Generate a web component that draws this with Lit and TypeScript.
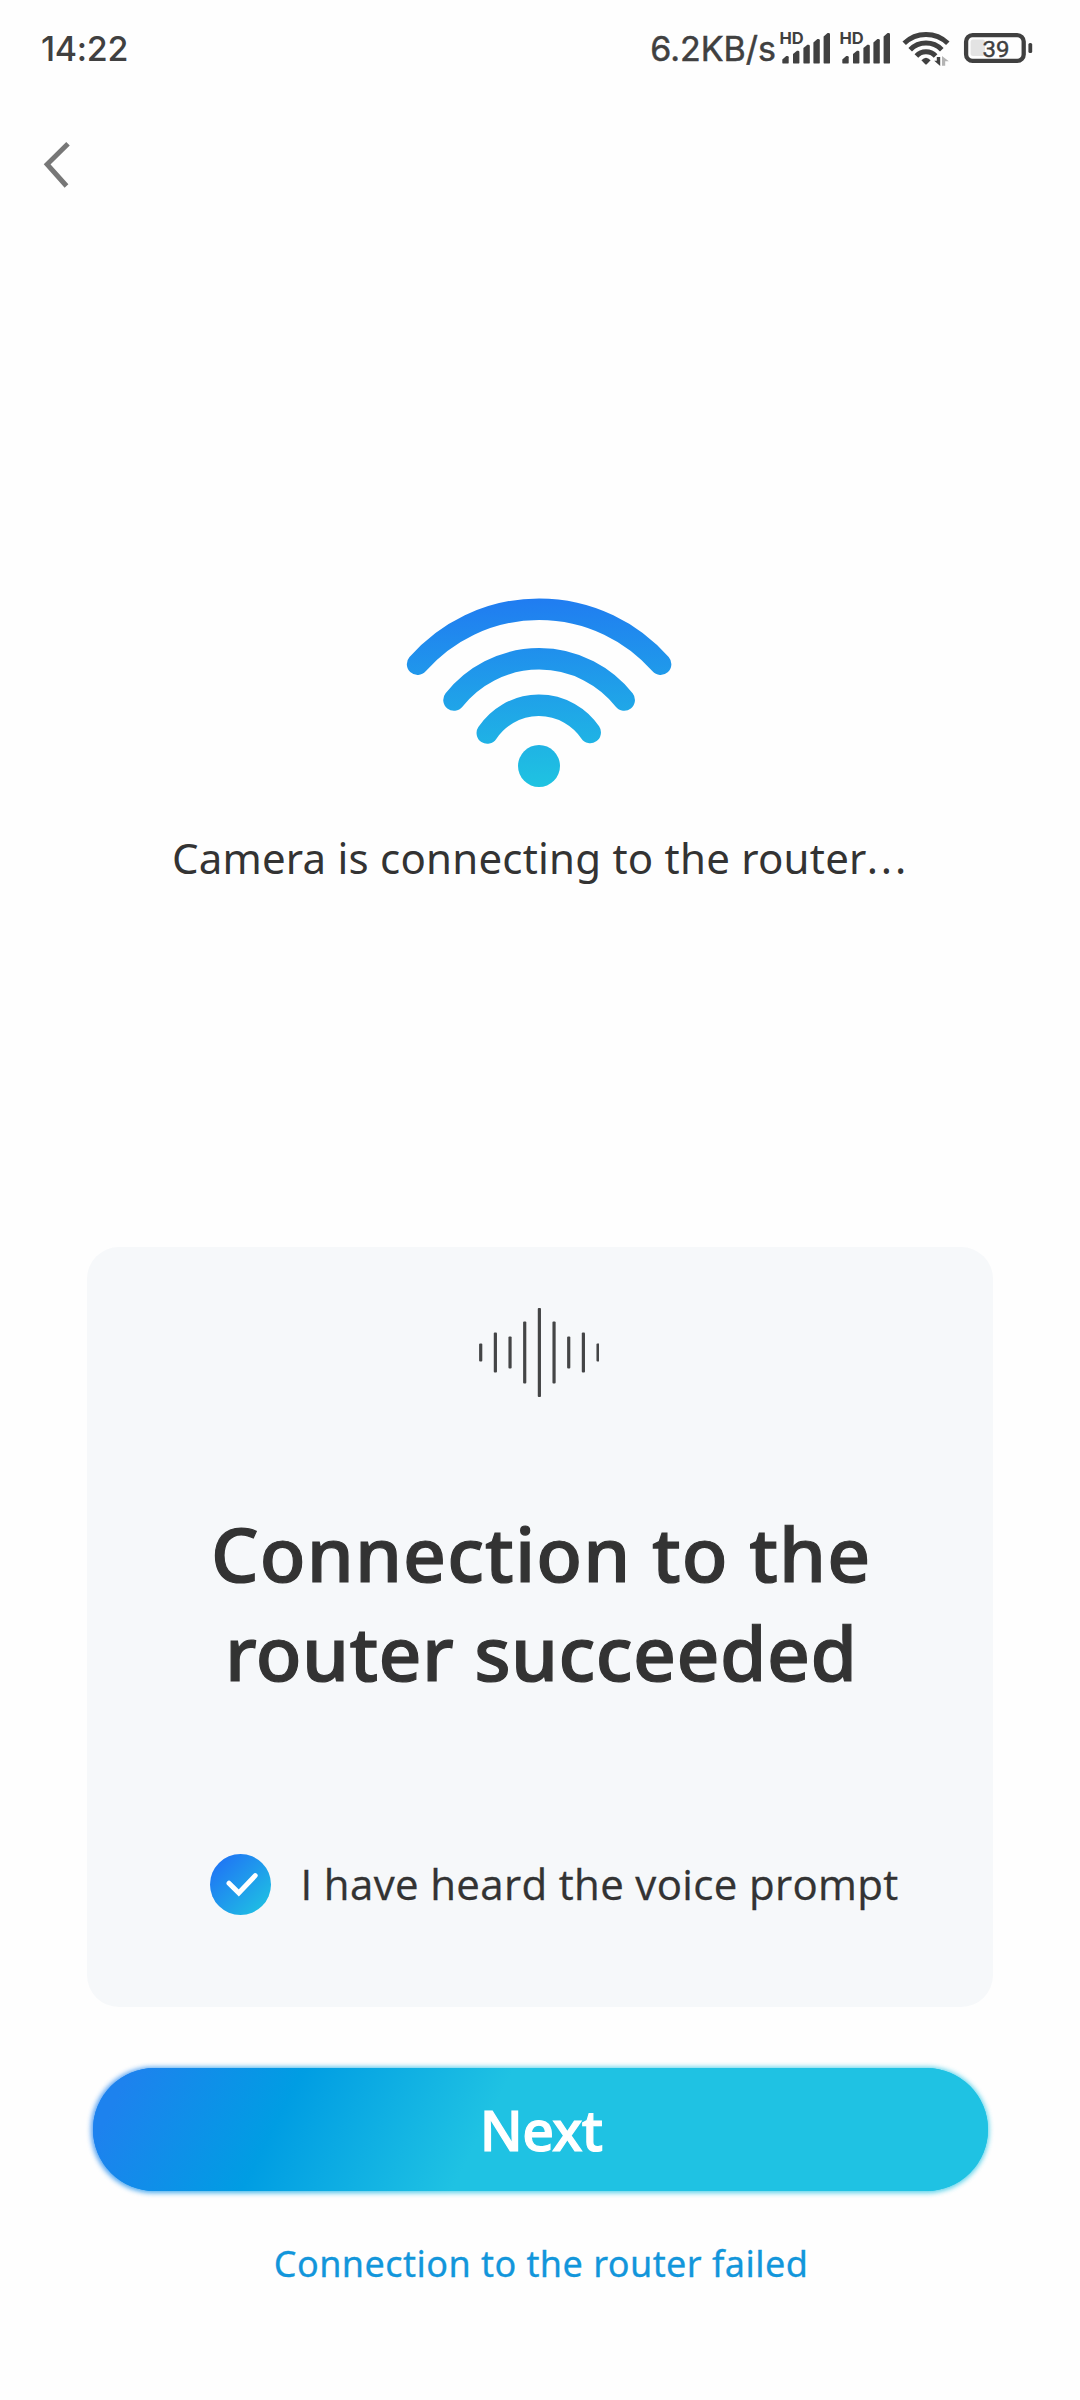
import { LitElement, html, svg, css } from 'lit';
import { customElement, property, state } from 'lit/decorators.js';

/* Device status bar: clock, network speed, two SIM signals, Wi-Fi and battery. */
@customElement('status-bar')
class StatusBar extends LitElement {
  @property() time = '14:22';
  @property() speed = '6.2KB/s';
  @property({ type: Number }) battery = 39;

  static styles = css`
    :host {
      display: flex;
      justify-content: space-between;
      height: 96px;
      padding: 0 47px 0 41px;
      color: #404040;
      font: 500 34px/97px Inter, 'Noto Sans', sans-serif;
    }
    .time {
      letter-spacing: -0.3px;
    }
    .right {
      display: flex;
    }
    .speed {
      margin-right: 4px;
      font-weight: 400;
      -webkit-text-stroke: 0.5px #404040;
    }
    svg {
      display: block;
      height: 96px;
      fill: #404040;
    }
    .signal {
      width: 60px;
    }
    .wifi {
      width: 62px;
    }
    .battery {
      width: 71px;
    }
    .hd {
      font: 700 16px Inter, sans-serif;
    }
    .level {
      font: 400 22.5px Roboto, sans-serif;
      stroke: #404040;
      stroke-width: 0.4;
    }
  `;

  private signal() {
    const bars = [
      [2.3, 56],
      [13, 50.7],
      [23.4, 44.7],
      [33.4, 39],
      [43.6, 33],
    ];
    return html`<svg class="signal" viewBox="0 0 60 96">
      <text class="hd" x="-0.6" y="43.8" textLength="24.2" lengthAdjust="spacingAndGlyphs">HD</text>
      ${bars.map(
        ([x, y]) =>
          svg`<path d="M${x} ${y + 3.4}L${x + 4} ${y}H${x + 5}Q${x + 6.4} ${y} ${x + 6.4} ${y + 1.2}V62.4Q${x + 6.4} 63.6 ${x + 5.2} 63.6H${x + 1.2}Q${x} 63.6 ${x} 62.4Z"/>`,
      )}
    </svg>`;
  }

  render() {
    return html`
      <span class="time">${this.time}</span>
      <div class="right">
        <span class="speed">${this.speed}</span>
        ${this.signal()} ${this.signal()}
        <svg class="wifi" viewBox="900 0 62 96">
          <g fill="none" stroke="#404040" stroke-width="5">
            <path d="M904.2 43.2A31.5 31.5 0 0 1 947.8 43.2" />
            <path d="M910.2 49.8A22 22 0 0 1 941.8 49.8" />
            <path d="M916.4 56A13 13 0 0 1 935.6 56" />
          </g>
          <path d="M921.4 60.2Q926 55.2 930.6 60.2L927 64Q926 65 925 64Z" />
          <path d="M936.8 57H940.2V66L934.2 60.8H936.8Z" />
          <path fill="#b4b4b4" d="M942 56V65.8H945.2V61.2H948.8Z" />
        </svg>
        <svg class="battery" viewBox="962 0 71 96">
          <rect x="970.6" y="39.4" width="14.5" height="16.6" rx="2.5" fill="#e3e3e3" />
          <rect x="966.1" y="35.1" width="57.6" height="25.8" rx="6.5" fill="none" stroke="#404040" stroke-width="4.3" />
          <rect x="1028.4" y="43" width="3.8" height="10" rx="1.6" />
          <text class="level" x="982.6" y="56.5" textLength="27" lengthAdjust="spacingAndGlyphs">${this.battery}</text>
        </svg>
      </div>
    `;
  }
}

@customElement('app-root')
class AppRoot extends LitElement {
  @state() private heard = true;

  static styles = css`
    :host {
      display: flex;
      flex-direction: column;
      box-sizing: border-box;
      width: 1080px;
      height: 2400px;
      overflow: hidden;
      background: #fefefe;
      color: #333;
      font-family: 'Noto Sans', 'Open Sans', sans-serif;
    }
    svg {
      display: block;
    }
    button {
      border: 0;
      padding: 0;
      background: none;
      font-family: inherit;
      color: inherit;
    }
    .nav {
      display: flex;
      align-items: center;
      height: 138px;
      padding-left: 40px;
    }
    .hero {
      display: flex;
      flex-direction: column;
      align-items: center;
      height: 1013px;
      padding-top: 364px;
      box-sizing: border-box;
    }
    .hero svg,
    .card > svg {
      margin-left: -2px;
    }
    .status {
      margin: 41.5px 0 0 1px;
      font-size: 42px;
      line-height: 56px;
      letter-spacing: 0.22px;
      white-space: nowrap;
    }
    .dots {
      letter-spacing: 2.9px;
    }
    .card {
      display: flex;
      flex-direction: column;
      align-items: center;
      box-sizing: border-box;
      width: 906px;
      height: 760px;
      margin-left: 87px;
      padding-top: 60px;
      border-radius: 32px;
      background: #f6f8fa;
    }
    .card h1 {
      margin: 106px 0 0 2.5px;
      font-size: 75px;
      font-weight: 500;
      line-height: 99px;
      text-align: center;
      white-space: nowrap;
      -webkit-text-stroke: 1.2px #333;
    }
    .line {
      display: block;
      letter-spacing: 1.1px;
    }
    .line + .line {
      letter-spacing: 0.45px;
    }
    .confirm {
      display: flex;
      align-items: center;
      align-self: flex-start;
      gap: 29.5px;
      margin: 152px 0 0 123px;
      font-family: 'Open Sans', sans-serif;
      font-size: 42px;
      line-height: 61px;
      letter-spacing: 0.35px;
      white-space: nowrap;
      -webkit-text-stroke: 0.3px #333;
    }
    .confirm span {
      margin-top: -2px;
    }
    .next {
      position: relative;
      isolation: isolate;
      width: 895px;
      height: 123px;
      margin: 61px 0 0 92.5px;
      padding-left: 2px;
      border-radius: 62px;
      background: linear-gradient(117deg, #1d82ee 4%, #009de3 22%, #1fc2e3 44%);
      color: #fff;
      font-size: 55.5px;
      font-weight: 500;
      line-height: 123px;
      letter-spacing: -0.7px;
      -webkit-text-stroke: 1.2px #fff;
    }
    .next::before {
      content: '';
      position: absolute;
      inset: -1.5px;
      z-index: -1;
      border-radius: inherit;
      background: inherit;
      filter: blur(2.5px);
      opacity: 0.75;
    }
    .next::after {
      content: '';
      position: absolute;
      inset: 0;
      z-index: -1;
      border-radius: inherit;
      background: inherit;
    }
    .failed {
      align-self: center;
      margin: 48px 0 0 2px;
      color: #1296db;
      font-size: 36px;
      line-height: 50px;
      letter-spacing: 0.45px;
      -webkit-text-stroke: 0.3px #1296db;
    }
  `;

  private wave() {
    const halves = [9, 20, 16, 31, 44.5, 31, 16, 20, 9];
    return html`<svg width="120" height="91" viewBox="0 0 120 91">
      ${halves.map(
        (h, i) =>
          svg`<rect x=${(i * 14.67 + 0.1).toFixed(2)} y=${45.4 - h} width="3.2" height=${h * 2} rx="1" fill="#444546"/>`,
      )}
    </svg>`;
  }

  render() {
    return html`
      <status-bar></status-bar>
      <nav class="nav">
        <button aria-label="Back">
          <svg width="36" height="52" viewBox="40 139 36 52" fill="none" stroke="#777" stroke-width="5">
            <path d="M68 143.8L47.2 164.3L66.5 186" />
          </svg>
        </button>
      </nav>
      <section class="hero">
        <svg width="268" height="190" viewBox="405 598 268 190">
          <defs>
            <linearGradient id="sky" gradientUnits="userSpaceOnUse" x1="532" y1="598" x2="539" y2="787">
              <stop offset="0" stop-color="#207cf1" />
              <stop offset="1" stop-color="#1fc3e1" />
            </linearGradient>
          </defs>
          <g fill="none" stroke="url(#sky)" stroke-width="21.5" stroke-linecap="round">
            <path d="M417.6 664.2A161.7 161.7 0 0 1 660.6 664.2" />
            <path d="M454 700A108.6 108.6 0 0 1 624.2 700" />
            <path d="M487.3 733A62 62 0 0 1 590.2 732.4" />
          </g>
          <circle cx="539" cy="766" r="21" fill="url(#sky)" />
        </svg>
        <div class="status">Camera is connecting to the router<span class="dots">...</span></div>
      </section>
      <section class="card">
        ${this.wave()}
        <h1><span class="line">Connection to the</span><span class="line">router succeeded</span></h1>
        <label class="confirm" @click=${() => (this.heard = !this.heard)}>
          <svg width="61" height="61" viewBox="0 0 61 61">
            <defs>
              <linearGradient id="tick" x1="0.1" y1="0.1" x2="0.9" y2="0.9">
                <stop offset="0" stop-color="#1f74f5" />
                <stop offset="1" stop-color="#1fbfe3" />
              </linearGradient>
            </defs>
            <circle cx="30.5" cy="30.5" r="30.5" fill="url(#tick)" />
            ${this.heard
              ? svg`<path d="M19 29.2L28.8 39L45.2 21.6" fill="none" stroke="#fff" stroke-width="5" stroke-linecap="round"/>`
              : null}
          </svg>
          <span>I have heard the voice prompt</span>
        </label>
      </section>
      <button class="next">Next</button>
      <button class="failed">Connection to the router failed</button>
    `;
  }
}
